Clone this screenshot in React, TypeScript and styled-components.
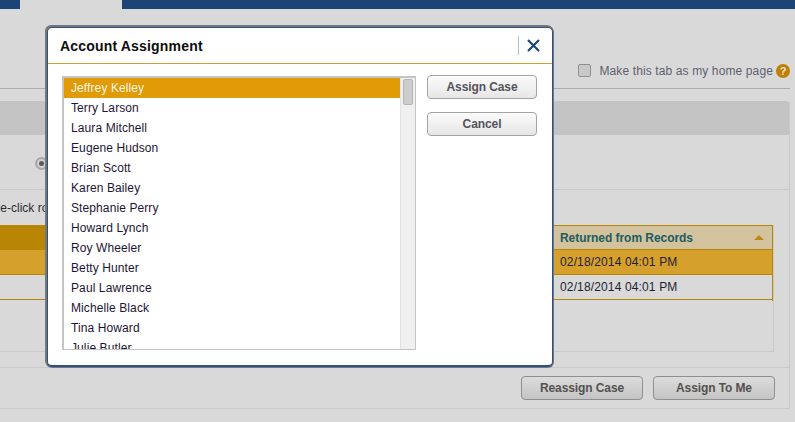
import React from "react";
import styled, { createGlobalStyle } from "styled-components";

const Global = createGlobalStyle`
  html, body { margin: 0; padding: 0; background: #d9d9d9; }
  body { width: 795px; height: 422px; overflow: hidden; font-family: "Liberation Sans", Arial, sans-serif; font-size: 12px; }
  * { box-sizing: border-box; }
`;

const Page = styled.div`
  position: relative;
  width: 795px;
  height: 422px;
  overflow: hidden;
  background: #d9d9d9;
`;

const TopBar = styled.div`
  height: 9px;
  background: #1c4476;
  padding-left: 20px;
`;

const ActiveTab = styled.div`
  width: 102px;
  height: 9px;
  background: #d9d9d9;
`;

const HomeRow = styled.div`
  width: 790px;
  height: 80px;
  border-bottom: 1px solid #acacac;
  display: flex;
  justify-content: flex-end;
  align-items: flex-start;
  padding-top: 55px;
  margin-bottom: 12px;
`;

const HomeCheck = styled.span`
  width: 13px;
  height: 13px;
  margin-right: 8px;
  background: #c9c9c9;
  border: 1px solid #8f8f8f;
  border-radius: 2px;
`;

const HomeLabel = styled.span`
  color: #5f5f70;
  font-size: 12px;
  line-height: 14px;
  letter-spacing: 0.12px;
  margin-right: 3px;
`;

const HelpBadge = styled.span`
  width: 14px;
  height: 14px;
  border-radius: 50%;
  background: #bf7f04;
  color: #e9e4d4;
  font-weight: bold;
  font-size: 11px;
  line-height: 14px;
  text-align: center;
`;

const Panel = styled.section`
  width: 790px;
  height: 308px;
  border-right: 1px solid #c9c9c9;
  border-bottom: 1px solid #c9c9c9;
  display: flex;
  flex-direction: column;
`;

const PanelHead = styled.div`
  height: 34px;
  background: #c3c3c3;
  border-radius: 0 3px 0 0;
`;

const RadioRow = styled.div`
  height: 55px;
  border-bottom: 1px solid #c9c9c9;
  padding: 22px 0 0 35px;
`;

const Radio = styled.span`
  display: flex;
  align-items: center;
  justify-content: center;
  width: 13px;
  height: 13px;
  border-radius: 50%;
  background: #cfcfcf;
  border: 2px solid #a8a8a8;
  &::after {
    content: "";
    width: 5px;
    height: 5px;
    border-radius: 50%;
    background: #5a5a5a;
  }
`;

const Note = styled.div`
  height: 35px;
  padding-top: 11px;
  margin-left: -31px;
  line-height: 14px;
  color: #2a2a33;
  white-space: nowrap;
`;

const TableFrame = styled.div`
  width: 774px;
  height: 127px;
  border-right: 1px solid #c9c9c9;
  border-bottom: 1px solid #c9c9c9;
`;

const Table = styled.div`
  display: grid;
  grid-template-columns: 553px 1fr;
  grid-auto-rows: 25px;
  height: 76px;
  border-right: 1px solid #b98505;
`;

const Cell = styled.div<{ $bg: string; $line?: boolean }>`
  background: ${(p) => p.$bg};
  border-bottom: 1px solid #b98505;
  border-top: ${(p) => (p.$line ? "1px solid #b98505" : "0")};
  padding-left: 7px;
  display: flex;
  align-items: center;
  justify-content: space-between;
  color: #1f1f33;
  letter-spacing: 0.14px;
`;

const HeadCell = styled(Cell)`
  color: #1d5d5d;
  font-weight: bold;
  letter-spacing: -0.05px;
  padding-right: 8px;
`;

const SortUp = styled.span`
  width: 0;
  height: 0;
  border-left: 5px solid transparent;
  border-right: 5px solid transparent;
  border-bottom: 5px solid #c08a10;
`;

const Footer = styled.div`
  margin-top: 15px;
  border-top: 1px solid #c9c9c9;
  flex: 1;
  display: flex;
  justify-content: flex-end;
  gap: 10px;
  padding: 8px 14px 0 0;
`;

const PageButton = styled.button`
  width: 122px;
  height: 24px;
  border: 1px solid #8f8f8f;
  border-radius: 4px;
  background: linear-gradient(#dcdcdc, #c4c4c4);
  color: #55514e;
  font: bold 12px "Liberation Sans", Arial, sans-serif;
  letter-spacing: -0.1px;
  padding: 0;
`;

const Modal = styled.div`
  position: absolute;
  left: 47px;
  top: 27px;
  width: 506px;
  height: 340px;
  background: #fff;
  border: 1px solid #2b5283;
  border-bottom-width: 2px;
  border-radius: 5px;
  box-shadow: 0 0 0 1px #777, -1px -1px 0 1px #777;
  display: flex;
  flex-direction: column;
`;

const ModalHead = styled.div`
  height: 36px;
  border-bottom: 1px solid #d49e2e;
  display: flex;
  align-items: center;
  padding: 0 12px;
`;

const ModalTitle = styled.h2`
  margin: 0;
  flex: 1;
  font-size: 14px;
  font-weight: bold;
  letter-spacing: 0.18px;
  color: #0d0d0d;
`;

const CloseSep = styled.span`
  width: 1px;
  height: 19px;
  background: #a9c0d8;
  margin-right: 8px;
`;

const CloseIcon = styled.svg`
  width: 13px;
  height: 13px;
  display: block;
`;

const ModalBody = styled.div`
  display: flex;
  align-items: flex-start;
  padding: 11px 15px 0 14px;
`;

const ListBox = styled.div`
  position: relative;
  width: 354px;
  height: 274px;
  margin-top: 1px;
  margin-right: 11px;
  border-style: solid;
  border-color: #c4c4c4;
  border-width: 2px 1px 1px 2px;
  display: flex;
  overflow: hidden;
`;

const Names = styled.ul`
  list-style: none;
  margin: 0;
  padding: 0;
  width: 336px;
  height: 100%;
  overflow: hidden;
`;

const Name = styled.li<{ $active?: boolean }>`
  height: 20px;
  line-height: 20px;
  padding-left: 7px;
  letter-spacing: 0.1px;
  background: ${(p) => (p.$active ? "#e09b07" : "transparent")};
  color: ${(p) => (p.$active ? "#fbf5e6" : "#1c1535")};
`;

const Scrollbar = styled.div`
  flex: 1;
  background: #f0f0f0;
  border-left: 1px solid #e2e2e2;
  padding: 1px 2px 0 2px;
`;

const Thumb = styled.div`
  width: 10px;
  height: 26px;
  background: #cdcdcd;
  border: 1px solid #b4b4b4;
  border-radius: 2px;
`;

const Actions = styled.div`
  display: flex;
  flex-direction: column;
  gap: 13px;
`;

const ModalButton = styled.button`
  width: 110px;
  height: 24px;
  border: 1px solid #a3a3a3;
  border-radius: 4px;
  background: linear-gradient(#fbfbfb, #e6e6e6);
  color: #55535a;
  font: bold 12px "Liberation Sans", Arial, sans-serif;
  letter-spacing: -0.1px;
  padding: 0;
`;

const names = [
  "Jeffrey Kelley", "Terry Larson", "Laura Mitchell", "Eugene Hudson", "Brian Scott",
  "Karen Bailey", "Stephanie Perry", "Howard Lynch", "Roy Wheeler", "Betty Hunter",
  "Paul Lawrence", "Michelle Black", "Tina Howard", "Julie Butler",
];

export default function App() {
  return (
    <Page>
      <Global />
      <TopBar><ActiveTab /></TopBar>
      <HomeRow>
        <HomeCheck />
        <HomeLabel>Make this tab as my home page</HomeLabel>
        <HelpBadge>?</HelpBadge>
      </HomeRow>
      <Panel>
        <PanelHead />
        <RadioRow><Radio /></RadioRow>
        <Note>Double-click row to open</Note>
        <TableFrame>
          <Table>
            <HeadCell $bg="#b98505" />
            <HeadCell $bg="#d2c29e" $line>
              Returned from Records
              <SortUp />
            </HeadCell>
            <Cell $bg="#d6a02c" />
            <Cell $bg="#d6a02c">02/18/2014 04:01 PM</Cell>
            <Cell $bg="#d9d9d9" />
            <Cell $bg="#d9d9d9">02/18/2014 04:01 PM</Cell>
          </Table>
        </TableFrame>
        <Footer>
          <PageButton>Reassign Case</PageButton>
          <PageButton>Assign To Me</PageButton>
        </Footer>
      </Panel>
      <Modal>
        <ModalHead>
          <ModalTitle>Account Assignment</ModalTitle>
          <CloseSep />
          <CloseIcon viewBox="0 0 13 13">
            <path d="M1 1 L12 12 M12 1 L1 12" stroke="#1c4476" strokeWidth="2.2" fill="none" />
          </CloseIcon>
        </ModalHead>
        <ModalBody>
          <ListBox>
            <Names>
              {names.map((n, i) => (
                <Name key={n} $active={i === 0}>{n}</Name>
              ))}
            </Names>
            <Scrollbar><Thumb /></Scrollbar>
          </ListBox>
          <Actions>
            <ModalButton>Assign Case</ModalButton>
            <ModalButton>Cancel</ModalButton>
          </Actions>
        </ModalBody>
      </Modal>
    </Page>
  );
}
